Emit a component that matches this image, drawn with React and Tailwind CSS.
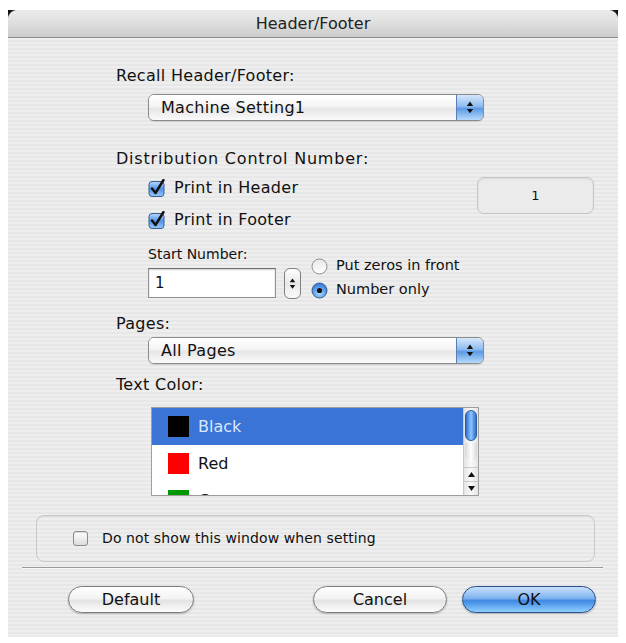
import { useState } from 'react';

const stripes =
  'bg-[repeating-linear-gradient(180deg,#eeeeee_0px,#eeeeee_2px,#e7e7e7_2px,#e7e7e7_4px)]';

// Aqua-style checkbox: blue box with a dark tick that spills over the top
function AquaCheck({ checked }) {
  if (!checked) {
    return (
      <span className="block h-[15px] w-[15px] rounded-[3px] border border-[#8c8c8c] bg-[linear-gradient(180deg,#ffffff,#dcdcdc)] shadow-[inset_0_1px_1px_rgba(0,0,0,0.15)]" />
    );
  }
  return (
    <svg width="18" height="18" viewBox="0 0 18 18">
      <defs>
        <linearGradient id="chk" x1="0" y1="0" x2="0" y2="1">
          <stop offset="0" stopColor="#b9d8fa" />
          <stop offset="0.5" stopColor="#4f93e6" />
          <stop offset="1" stopColor="#98c9fb" />
        </linearGradient>
      </defs>
      <rect x="1" y="2.5" width="15" height="15" rx="3" fill="url(#chk)" stroke="#3b5f93" strokeWidth="1" />
      <path d="M4 9.5 L7.5 14 L15.5 1" fill="none" stroke="#111" strokeWidth="2.4" strokeLinecap="round" strokeLinejoin="round" />
    </svg>
  );
}

function AquaRadio({ checked }) {
  return (
    <svg width="17" height="17" viewBox="0 0 17 17">
      <defs>
        <radialGradient id="rdOn" cx="0.5" cy="0.7" r="0.6">
          <stop offset="0" stopColor="#a9d8ff" />
          <stop offset="1" stopColor="#3a82dc" />
        </radialGradient>
        <linearGradient id="rdOff" x1="0" y1="0" x2="0" y2="1">
          <stop offset="0" stopColor="#e8e8e8" />
          <stop offset="1" stopColor="#ffffff" />
        </linearGradient>
      </defs>
      <circle cx="8.5" cy="8.5" r="7.5" fill={checked ? 'url(#rdOn)' : 'url(#rdOff)'} stroke={checked ? '#3a5c8d' : '#8e8e8e'} />
      {checked && <circle cx="8.5" cy="8.5" r="2.6" fill="#111" />}
    </svg>
  );
}

function UpDown({ size = 8, color = '#111' }) {
  return (
    <svg width={size} height={size * 1.6} viewBox="0 0 8 13">
      <path d="M4 0.5 L7.2 5 L0.8 5 Z" fill={color} />
      <path d="M4 12.5 L7.2 8 L0.8 8 Z" fill={color} />
    </svg>
  );
}

function PopUp({ value }) {
  return (
    <div className="flex h-[27px] w-[336px] overflow-hidden rounded-[6px] border border-[#8b8b8b] shadow-[0_1px_1px_rgba(0,0,0,0.12)]">
      <div className="flex flex-1 items-center bg-[linear-gradient(180deg,#ffffff_0%,#f4f4f4_45%,#e6e6e6_55%,#fafafa_100%)] pl-[12px] text-[16px] tracking-[0.3px] text-[#111]">
        {value}
      </div>
      <div className="flex w-[27px] items-center justify-center border-l border-[#5a7fb6] bg-[linear-gradient(180deg,#d5e7fb_0%,#8fbcf0_45%,#5d9ae4_55%,#b6dafc_100%)]">
        <UpDown />
      </div>
    </div>
  );
}

function AquaButton({ label, primary, width }) {
  const skin = primary
    ? 'border-[#2a4f8c] bg-[linear-gradient(180deg,#c8e0fb_0%,#7fb3f0_45%,#3e88e2_55%,#8fd0ff_100%)]'
    : 'border-[#7c7c7c] bg-[linear-gradient(180deg,#ffffff_0%,#f3f3f3_45%,#e3e3e3_55%,#fdfdfd_100%)]';
  return (
    <button
      className={`flex h-[27px] items-center justify-center rounded-full border text-[16px] text-[#111] shadow-[0_1px_2px_rgba(0,0,0,0.25)] ${skin}`}
      style={{ width }}
    >
      {label}
    </button>
  );
}

const colors = [
  { name: 'Black', swatch: '#000000' },
  { name: 'Red', swatch: '#ff0000' },
  { name: 'Green', swatch: '#009900' },
];

export default function App() {
  const [selected] = useState(0);

  return (
    <div className="h-[643px] w-[626px] bg-white px-[8px] pt-[10px] font-['DejaVu_Sans',sans-serif] text-[#111]">
      <div className="flex h-[627px] w-[610px] flex-col">
        {/* title bar */}
        <div className="bg-[radial-gradient(circle_at_0_0,#000_0px,#333_6px,transparent_10px),radial-gradient(circle_at_100%_0,#000_0px,#333_6px,transparent_10px)]">
          <div className="flex h-[28px] items-center justify-center rounded-t-[9px] border-b border-[#8d8d8d] bg-[linear-gradient(180deg,#ececec_0%,#dedede_50%,#cbcbcb_100%)] text-[16px] text-[#222]">
            Header/Footer
          </div>
        </div>

        <div className={`flex flex-1 flex-col ${stripes}`}>
          <div className="ml-[108px] mt-[29px] text-[16px] leading-[18px] tracking-[0.3px]">Recall Header/Footer:</div>
          <div className="ml-[140px] mt-[9px]">
            <PopUp value="Machine Setting1" />
          </div>

          <div className="ml-[108px] mt-[29px] text-[16px] leading-[18px] tracking-[0.8px]">Distribution Control Number:</div>

          <div className="mt-[10px] flex">
            <div className="ml-[140px] flex flex-col gap-[12px]">
              <label className="flex h-[20px] items-center gap-[8px] text-[16px] tracking-[0.3px]">
                <AquaCheck checked />
                Print in Header
              </label>
              <label className="flex h-[20px] items-center gap-[8px] text-[16px] tracking-[0.3px]">
                <AquaCheck checked />
                Print in Footer
              </label>
            </div>
            <div className="ml-auto mr-[24px] -mt-[1px] flex h-[37px] w-[117px] items-center justify-center rounded-[7px] border border-[#c5c5c5] bg-[#ebebeb] text-[13px] shadow-[inset_0_1px_2px_rgba(0,0,0,0.08)]">
              1
            </div>
          </div>

          <div className="ml-[140px] mt-[16px] flex">
            <div className="flex flex-col">
              <div className="text-[14px] leading-[16px]">Start Number:</div>
              <div className="mt-[6px] flex h-[30px] w-[128px] items-center border border-[#8f8f8f] border-t-[#6d6d6d] bg-white pl-[6px] text-[15px] shadow-[inset_0_1px_2px_rgba(0,0,0,0.2)]">
                1
              </div>
            </div>
            <div className="ml-[8px] flex h-[31px] w-[17px] items-center justify-center self-end rounded-[6px] border border-[#7f7f7f] bg-[linear-gradient(180deg,#ffffff,#e8e8e8_50%,#fafafa)]">
              <UpDown size={7} />
            </div>
            <div className="ml-[10px] mt-[11px] flex flex-col gap-[6px] text-[14.5px]">
              <label className="flex h-[18px] items-center gap-[8px]">
                <AquaRadio checked={false} />
                Put zeros in front
              </label>
              <label className="flex h-[18px] items-center gap-[8px]">
                <AquaRadio checked />
                Number only
              </label>
            </div>
          </div>

          <div className="ml-[108px] mt-[16px] text-[16px] leading-[18px] tracking-[0.3px]">Pages:</div>
          <div className="ml-[140px] mt-[4px]">
            <PopUp value="All Pages" />
          </div>

          <div className="ml-[108px] mt-[12px] text-[16px] leading-[18px] tracking-[0.3px]">Text Color:</div>

          {/* colour list */}
          <div className="ml-[143px] mt-[13px] flex h-[89px] w-[328px] overflow-hidden border border-[#9d9d9d] bg-white">
            <div className="flex-1">
              {colors.map((c, i) => (
                <div
                  key={c.name}
                  className={`flex h-[37px] items-center gap-[9px] pl-[16px] text-[16px] ${i === selected ? 'bg-[#3a74d6] text-[#dbe8ff]' : 'text-[#111]'}`}
                >
                  <span className="h-[21px] w-[21px]" style={{ background: c.swatch }} />
                  {c.name}
                </div>
              ))}
            </div>
            <div className="flex w-[15px] flex-col border-l border-[#c9c9c9] bg-[linear-gradient(90deg,#e4e4e4,#fafafa_50%,#e4e4e4)]">
              <div className="mx-auto mt-[2px] h-[31px] w-[12px] rounded-full border border-[#2d5c9e] bg-[linear-gradient(90deg,#2f6fd0,#8ec4ff_50%,#2f6fd0)]" />
              <div className="mx-auto mt-[2px] h-[18px] w-[12px] rounded-b-full bg-[linear-gradient(90deg,#d8d8d8,#ffffff_50%,#d8d8d8)]" />
              <div className="mt-auto flex h-[14px] items-center justify-center border-t border-[#c9c9c9]">
                <svg width="7" height="5" viewBox="0 0 7 5"><path d="M3.5 0 L7 5 L0 5 Z" fill="#111" /></svg>
              </div>
              <div className="flex h-[14px] items-center justify-center border-t border-[#c9c9c9]">
                <svg width="7" height="5" viewBox="0 0 7 5"><path d="M3.5 5 L7 0 L0 0 Z" fill="#111" /></svg>
              </div>
            </div>
          </div>

          {/* options group */}
          <div className="ml-[28px] mt-[19px] flex h-[47px] w-[559px] items-center rounded-[8px] border border-[#c8c8c8] pl-[36px] text-[14px] shadow-[inset_0_1px_1px_rgba(0,0,0,0.05)]">
            <AquaCheck checked={false} />
            <span className="ml-[14px] tracking-[0.1px]">Do not show this window when setting</span>
          </div>

          <div className="ml-[14px] mt-[5px] h-[2px] w-[581px] border-t border-[#9a9a9a] bg-white/70" />

          <div className="mt-[17px] flex">
            <div className="ml-[60px]">
              <AquaButton label="Default" width={126} />
            </div>
            <div className="ml-[119px]">
              <AquaButton label="Cancel" width={134} />
            </div>
            <div className="ml-[15px]">
              <AquaButton label="OK" primary width={134} />
            </div>
          </div>
        </div>
      </div>
    </div>
  );
}
